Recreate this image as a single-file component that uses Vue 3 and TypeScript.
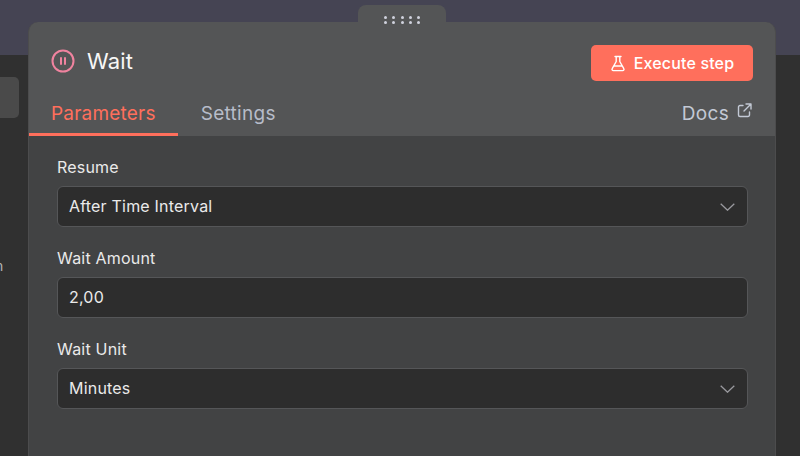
<script setup lang="ts">
type Field = { label: string; value: string; select: boolean }

const fields: Field[] = [
  { label: 'Resume', value: 'After Time Interval', select: true },
  { label: 'Wait Amount', value: '2,00', select: false },
  { label: 'Wait Unit', value: 'Minutes', select: true },
]
</script>

<template>
  <div class="page">
    <div class="stub"></div>
    <span class="stub-text">n</span>
    <section class="panel">
      <div class="handle">
        <span v-for="n in 10" :key="n" class="dot"></span>
      </div>
      <header class="head">
        <div class="title">
          <svg class="pause" width="24" height="24" viewBox="0 0 24 24" fill="none" stroke="#f0839f" stroke-width="2" stroke-linecap="round">
            <circle cx="12" cy="12" r="10.5" />
            <path d="M10 9v6M14 9v6" />
          </svg>
          <span>Wait</span>
        </div>
        <button type="button" class="run">
          <svg width="16" height="17" viewBox="0 0 16 17" fill="none" stroke="#fff" stroke-width="1.4" stroke-linejoin="round" stroke-linecap="round">
            <path d="M5 1.5h6M6.2 1.5v5L2.2 13.600c-.6 1 .1 2 1.100 2h9.400c1 0 1.700-1 1.100-2L9.800 6.500v-5M4.200 11h7.600" />
          </svg>
          Execute step
        </button>
      </header>
      <nav class="tabs">
        <a class="tab active">Parameters</a>
        <a class="tab">Settings</a>
        <a class="docs">
          Docs
          <svg width="15" height="15" viewBox="0 0 15 15" fill="none" stroke="#c3c9d5" stroke-width="1.4" stroke-linecap="round" stroke-linejoin="round">
            <path d="M6 2.500H3A1.500 1.500 0 0 0 1.500 4v8A1.500 1.500 0 0 0 3 13.500h8a1.500 1.500 0 0 0 1.500-1.500V9M9 1h5v5M14 1 7 8" />
          </svg>
        </a>
      </nav>
      <div class="body">
        <div v-for="field in fields" :key="field.label" class="field">
          <label>{{ field.label }}</label>
          <div class="control">
            <span>{{ field.value }}</span>
            <svg v-if="field.select" width="15" height="8" viewBox="0 0 15 8" fill="none" stroke="#9a9a9f" stroke-width="1.300">
              <path d="M.7 .7 7.500 7.200 14.300 .7" />
            </svg>
          </div>
        </div>
      </div>
    </section>
  </div>
</template>

<style scoped>
.page {
  position: relative;
  width: 800px;
  height: 456px;
  overflow: hidden;
  padding: 22px 24px 0 28px;
  box-sizing: border-box;
  background: linear-gradient(#454453 0, #454453 55px, #303030 55px);
  font-family: Inter, "Noto Sans", sans-serif;
}

.stub {
  position: absolute;
  left: -20px;
  top: 77px;
  width: 39px;
  height: 41px;
  border-radius: 5px;
  background: #4a4a4a;
}

.stub-text {
  position: absolute;
  left: -5px;
  top: 257px;
  font-size: 14px;
  color: #b5b5b5;
}

.panel {
  position: relative;
  height: 470px;
  box-sizing: border-box;
  border: solid #4c4c4d;
  border-width: 0 1px;
  border-radius: 10px 10px 0 0;
  background: #545556;
}

.handle {
  position: absolute;
  left: 329px;
  top: -17px;
  width: 88px;
  height: 19px;
  padding: 0 26px;
  box-sizing: border-box;
  display: grid;
  grid-template-columns: repeat(5, 3px);
  justify-content: space-between;
  align-content: end;
  row-gap: 2px;
  border-radius: 8px 8px 0 0;
  background: #545556;
}

.dot {
  width: 3px;
  height: 3px;
  border-radius: 50%;
  background: #d0d2dd;
}

.head {
  display: flex;
  justify-content: space-between;
  align-items: flex-start;
  padding: 23px 22px 0 22px;
}

.title {
  display: flex;
  align-items: center;
  gap: 12px;
  height: 32px;
  font-size: 22px;
  letter-spacing: 0.2px;
  color: #f7f7f7;
}

.pause {
  flex: none;
}

.run {
  display: flex;
  align-items: center;
  justify-content: center;
  gap: 8px;
  width: 162px;
  height: 36px;
  padding: 0;
  border: 0;
  border-radius: 5px;
  background: #ff6f5c;
  color: #fff;
  font-family: inherit;
  font-size: 16px;
  letter-spacing: 0.15px;
  font-weight: 500;
}

.tabs {
  display: flex;
  gap: 1px;
  align-items: flex-start;
  height: 36px;
  margin-top: 19px;
  font-size: 19px;
  letter-spacing: 0.3px;
}

.tab {
  height: 33px;
  padding: 0 22px;
  line-height: 27px;
  color: #b7bcc9;
}

.tab.active {
  color: #ff6f5c;
  letter-spacing: 0.2px;
  border-bottom: 3px solid #ff6f5c;
}

.docs {
  margin-left: auto;
  display: flex;
  align-items: flex-start;
  gap: 8px;
  padding-right: 23px;
  line-height: 27px;
  color: #c3c9d5;
}

.docs svg {
  margin-top: 3px;
}

.body {
  display: flex;
  flex-direction: column;
  gap: 20px;
  height: 320px;
  padding: 20px 27px 0 28px;
  background: #424344;
}

.field label {
  display: block;
  height: 30px;
  line-height: 22px;
  font-size: 16px;
  letter-spacing: 0.2px;
  color: #eaeaea;
}

.control {
  display: flex;
  align-items: center;
  justify-content: space-between;
  height: 41px;
  padding: 0 12px 2px 11px;
  box-sizing: border-box;
  border: 1px solid #555658;
  border-radius: 6px;
  background: #2d2d2d;
  font-size: 16px;
  letter-spacing: 0.2px;
  color: #eaeaea;
}

.control svg {
  margin-top: 2px;
}
</style>
